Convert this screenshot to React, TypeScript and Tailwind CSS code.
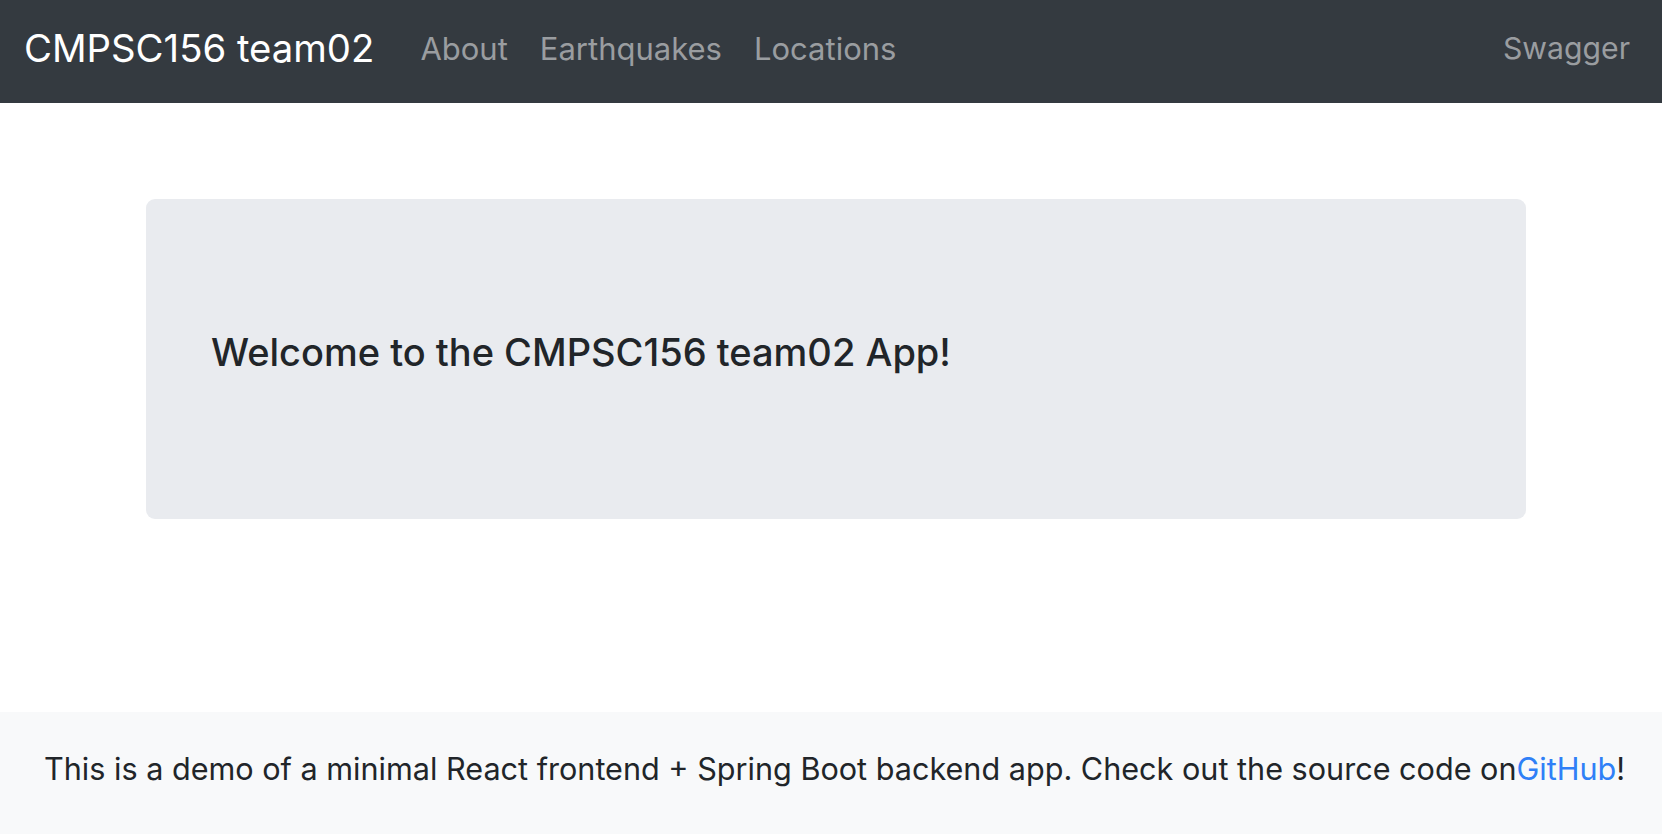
import React from "react";

export default function App() {
  return (
    <div
      className="min-h-screen flex flex-col bg-white text-[#212529]"
      style={{ fontFamily: "Inter, 'Liberation Sans', sans-serif" }}
    >
      <nav className="h-[103px] bg-[#343a40] flex items-center pl-[24px] pr-[32px] pb-[6px]">
        <a className="text-[38.3px] text-white leading-none mr-[46px]">CMPSC156 team02</a>
        <div className="flex items-center gap-[32px] text-[31px] text-[#9a9da0] leading-none">
          <a>About</a>
          <a>Earthquakes</a>
          <a>Locations</a>
        </div>
        <div className="ml-auto text-[30.2px] text-[#9a9da0] leading-none">
          <a>Swagger</a>
        </div>
      </nav>
      <main className="flex-1 pt-[96px]">
        <div className="ml-[146px] w-[1380px] h-[320px] bg-[#e9ebef] rounded-[9px] flex items-center pl-[65px]">
          <h1 className="text-[38px] font-medium leading-none -mt-[14px]">
            Welcome to the CMPSC156 team02 App!
          </h1>
        </div>
      </main>
      <footer className="h-[122px] bg-[#f8f9fa] flex items-center pl-[44px] pb-[8px]">
        <p className="text-[30.6px] leading-none">
          This is a demo of a minimal React frontend + Spring Boot backend app. Check out the source code on
          <a className="text-[#2f80f7]">GitHub</a>!
        </p>
      </footer>
    </div>
  );
}
